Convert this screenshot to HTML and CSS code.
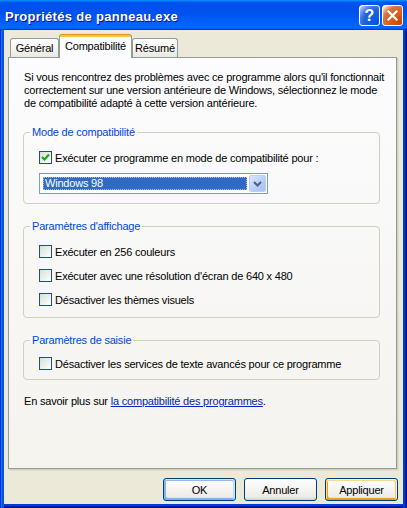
FILE: index.html
```html
<!DOCTYPE html>
<html lang="fr">
<head>
  <meta charset="UTF-8">
  <title>Propriétés de panneau.exe</title>
  <link rel="stylesheet" href="styles.css">
</head>
<body>

  <div class="window">
    <div class="titlebar">
      <span class="title">Propriétés de panneau.exe</span>
      <div class="caption-buttons">
        <button class="cap help">?</button>
        <button class="cap close">
          <svg width="11" height="11" viewBox="0 0 11 11"><path d="M1.5 1.5 L9.5 9.5 M9.5 1.5 L1.5 9.5" stroke="#fff" stroke-width="2.2" stroke-linecap="square"/></svg>
        </button>
      </div>
    </div>

    <div class="client">
      <!-- onglets -->
      <div class="tabs">
        <div class="tab tab-general">Général</div>
        <div class="tab tab-compat active">Compatibilité</div>
        <div class="tab tab-resume">Résumé</div>
      </div>

      <div class="panel">
        <p class="intro">Si vous rencontrez des problèmes avec ce programme alors qu'il fonctionnait<br>correctement sur une version antérieure de Windows, sélectionnez le mode<br>de compatibilité adapté à cette version antérieure.</p>

        <fieldset class="group">
          <legend>Mode de compatibilité</legend>
          <div class="group-body">
            <label class="check">
              <span class="box"><svg width="9" height="9" viewBox="0 0 9 9"><polyline points="1,4 3.5,6.5 8,1.5" fill="none" stroke="#21A121" stroke-width="2.2"/></svg></span>
              Exécuter ce programme en mode de compatibilité pour :
            </label>
            <div class="combo">
              <span class="combo-value">Windows 98</span>
              <span class="combo-btn"><svg width="9" height="6" viewBox="0 0 9 6"><polyline points="1,1 4.5,4.5 8,1" fill="none" stroke="#4D6185" stroke-width="2"/></svg></span>
            </div>
          </div>
        </fieldset>

        <fieldset class="group">
          <legend>Paramètres d'affichage</legend>
          <div class="group-body rows">
            <label class="check"><span class="box"></span>Exécuter en 256 couleurs</label>
            <label class="check"><span class="box"></span>Exécuter avec une résolution d'écran de 640 x 480</label>
            <label class="check"><span class="box"></span>Désactiver les thèmes visuels</label>
          </div>
        </fieldset>

        <fieldset class="group">
          <legend>Paramètres de saisie</legend>
          <div class="group-body short">
            <label class="check"><span class="box"></span>Désactiver les services de texte avancés pour ce programme</label>
          </div>
        </fieldset>

        <p class="more">En savoir plus sur <a href="#">la compatibilité des programmes</a>.</p>
      </div>

      <!-- boutons -->
      <div class="actions">
        <button class="btn default">OK</button>
        <button class="btn">Annuler</button>
        <button class="btn hot">Appliquer</button>
      </div>
    </div>
  </div>

</body>
</html>
```

FILE: styles.css
```css
* {
  box-sizing: border-box;
}

body {
  margin: 0;
  font-family: "Liberation Sans", Arial, sans-serif;
  font-size: 11px;
  letter-spacing: -0.2px;
  color: #000;
  background: #fff;
}

.window {
  width: 407px;
  height: 508px;
  display: flex;
  flex-direction: column;
  background: #ECE9D8;
}

.titlebar {
  height: 30px;
  flex: none;
  display: flex;
  align-items: center;
  justify-content: space-between;
  padding: 0 4px 0 5px;
  background: linear-gradient(180deg, #0997FF, #0053EE 8%, #0050EE 40%, #0066FF 88%, #0066FF 93%, #005BFF 95%, #003DD7 96%, #003DD7);
}

.title {
  margin-top: 3px;
  color: #fff;
  font-weight: bold;
  font-size: 13px;
  letter-spacing: 0.3px;
  text-shadow: 1px 1px 0 #0F1089;
}

.caption-buttons {
  display: flex;
  gap: 2px;
  margin-top: 1px;
}

.cap {
  width: 21px;
  height: 21px;
  padding: 0;
  border: 1px solid #fff;
  border-radius: 3px;
  display: flex;
  align-items: center;
  justify-content: center;
  color: #fff;
  font-family: "Liberation Sans", Arial, sans-serif;
  font-weight: bold;
  font-size: 16px;
  line-height: 1;
}

.help {
  background: radial-gradient(circle at 90% 90%, #0054E9 0%, #2263D5 55%, #4479E4 70%, #A3BBEC 90%, #fff 100%);
}

.close {
  background: radial-gradient(circle at 90% 90%, #CC4600 0%, #DC6527 55%, #CD7546 70%, #FFCCB2 90%, #fff 100%);
}

.client {
  flex: 1;
  display: flex;
  flex-direction: column;
  padding: 0 10px 4px 8px;
  box-shadow: inset 1px 0 #0831D9, inset 2px 0 #166AEE, inset 4px 0 #0855DD,
    inset -1px 0 #00138C, inset -2px 0 #001EA0, inset -4px 0 #003BDA,
    inset 0 -1px #00138C, inset 0 -2px #001EA0, inset 0 -4px #003BDA;
}

/* onglets */
.tabs {
  height: 27px;
  flex: none;
  display: flex;
  align-items: flex-end;
  padding-left: 2px;
}

.tab {
  height: 19px;
  padding: 0;
  border: 1px solid #919B9C;
  border-bottom: none;
  border-radius: 3px 3px 0 0;
  background: linear-gradient(#FFFFFF, #F3F3EF 60%, #E9E8E1);
  line-height: 18px;
  text-align: center;
}

.tab-general {
  width: 49px;
}

.tab-compat {
  width: 73px;
}

.tab-resume {
  width: 46px;
}

.tab.active {
  position: relative;
  z-index: 1;
  height: 24px;
  margin-bottom: -1px;
  border-top-color: #E68B2C;
  background: linear-gradient(#FFC83C 0 2px, #FCFCFE 2px);
  line-height: 22px;
}

.panel {
  height: 412px;
  flex: none;
  padding: 13px 16px 0 14px;
  border: 1px solid #919B9C;
  background: linear-gradient(#FCFCFE, #F4F3EE);
  box-shadow: 1px 1px 0 #D0CEBF, 2px 2px 0 #E3E0D0;
}

.intro {
  margin: 0;
  padding-left: 1px;
  line-height: 13px;
  white-space: nowrap;
}

.group {
  margin: 16px 0 0;
  padding: 0;
  min-width: 0;
  border: 1px solid #D0D0BF;
  border-radius: 4px;
}

.group legend {
  margin-left: 6px;
  padding: 0 2px;
  color: #0046D5;
  line-height: 13px;
}

.group-body {
  display: flex;
  flex-direction: column;
  padding: 12px 15px 9px;
}

.group-body.rows {
  gap: 11px;
  padding-bottom: 11px;
}

.group-body.short {
  padding-top: 10px;
}

.check {
  display: flex;
  align-items: center;
  gap: 3px;
  height: 13px;
  white-space: nowrap;
}

.box {
  width: 13px;
  height: 13px;
  flex: none;
  display: flex;
  align-items: center;
  justify-content: center;
  border: 1px solid #1C5180;
  background: linear-gradient(135deg, #DCDCD7, #FFFFFF);
}

.combo {
  width: 229px;
  height: 21px;
  margin-top: 9px;
  display: flex;
  padding: 1px;
  border: 1px solid #7F9DB9;
  background: #fff;
}

.combo-value {
  flex: 1;
  margin: 2px;
  padding-left: 2px;
  background: #316AC5;
  color: #fff;
  line-height: 13px;
  outline: 1px dotted #A8C0EA;
  outline-offset: -1px;
}

.combo-btn {
  width: 17px;
  display: flex;
  align-items: center;
  justify-content: center;
  border: 1px solid #B9CDF5;
  border-radius: 2px;
  background: linear-gradient(135deg, #DCE7FD, #B6CCF9 60%, #A7C0F5);
}

.more {
  margin: 15px 0 0;
  padding-left: 1px;
  line-height: 13px;
}

.more a {
  color: #0A22B8;
  text-decoration: underline;
}

/* boutons */
.actions {
  display: flex;
  justify-content: flex-end;
  gap: 8px;
  margin-top: 9px;
  margin-right: -1px;
}

.btn {
  width: 73px;
  height: 23px;
  padding: 0;
  border: 1px solid #003C74;
  border-radius: 3px;
  background: linear-gradient(180deg, #FFFFFF, #ECEBE6 86%, #D6D0C5);
  font-family: "Liberation Sans", Arial, sans-serif;
  font-size: 11px;
  letter-spacing: -0.2px;
  color: #000;
}

.btn.default {
  box-shadow: inset -1px 1px #CEE7FF, inset 1px 2px #98B8EA, inset -2px 2px #BCD4F6, inset 1px -1px #89ADE4, inset 2px -2px #89ADE4;
}

.btn.hot {
  box-shadow: inset -1px 1px #FFF0CF, inset 1px 2px #FDD889, inset -2px 2px #FBC761, inset 2px -2px #E5A01A;
}
```
